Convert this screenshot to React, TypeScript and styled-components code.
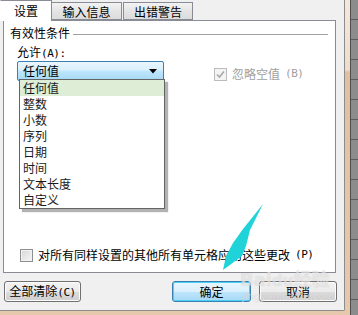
import React from 'react';
import styled, {createGlobalStyle} from "styled-components";

const options = ['任何值', '整数', '小数', '序列', '日期', '时间', '文本长度', '自定义'];

function App() {
    return (
        <Screen>
            <GlobalStyle/>
            <Frame>
                <Dialog>
                    <Tabs>
                        <Tab active>设置</Tab>
                        <Tab>输入信息</Tab>
                        <Tab>出错警告</Tab>
                    </Tabs>
                    <Panel>
                        <GroupHeader>
                            <span>有效性条件</span>
                            <GroupLine/>
                        </GroupHeader>
                        <Label>允许<Latin>(A):</Latin></Label>
                        <CriteriaRow>
                            <Select>
                                <span>任何值</span>
                                <svg width="8" height="5" viewBox="0 0 8 5">
                                    <polygon points="0,0 8,0 4,4.5" fill="#000"/>
                                </svg>
                            </Select>
                            <CheckLabel disabled>
                                <CheckBox disabled>
                                    <svg width="9" height="9" viewBox="0 0 9 9">
                                        <path d="M1 4.5 L3.5 7 L8 1.5" stroke="#a8a8a8" strokeWidth="1.6" fill="none"/>
                                    </svg>
                                </CheckBox>
                                忽略空值<Latin>(B)</Latin>
                            </CheckLabel>
                        </CriteriaRow>
                        <ApplyRow>
                            <CheckLabel>
                                <CheckBox/>
                                对所有同样设置的其他所有单元格应用这些更改<Latin>(P)</Latin>
                            </CheckLabel>
                        </ApplyRow>
                        <List>
                            {options.map((o, i) => (
                                <Item key={o} selected={i === 0}>{o}</Item>
                            ))}
                        </List>
                    </Panel>
                    <Buttons>
                        <Button width={77}>全部清除<Latin>(C)</Latin></Button>
                        <Spacer/>
                        <Button width={79} primary>确定</Button>
                        <Button width={78}>取消</Button>
                    </Buttons>
                    <Watermark>
                        <WatermarkLogo>Bai<small>du</small>经验</WatermarkLogo>
                        <WatermarkUrl>jingyan.baidu.com</WatermarkUrl>
                    </Watermark>
                </Dialog>
            </Frame>
            <Sheet/>
            <Arrow width="46" height="72" viewBox="0 0 46 72">
                <polygon points="43,2 30,28 26,44 22,54 3,68 6,54 13,41 23,27" fill="#1fd3d9"/>
            </Arrow>
        </Screen>
    )
}

export default App;

const GlobalStyle = createGlobalStyle`
    html, body {
        margin: 0;
        padding: 0;
        background: #7b7b7b;
    }
    body {
        font-family: "Noto Sans CJK SC", "Liberation Sans", sans-serif;
        font-size: 12px;
        color: #000;
    }
`
const Screen = styled.div`
    width: 358px;
    height: 315px;
    display: flex;
    position: relative;
    overflow: hidden;
`
const Frame = styled.div`
    width: 351px;
    height: 315px;
    box-sizing: border-box;
    padding: 0 5px 4px 0;
    background: linear-gradient(to bottom, #f4e8dc 0, #efdccb 70px, #e0c0a0 72px, #e6c9ad 100%);
    border-right: 1px solid #4e4e4e;
    display: flex;
`
const Sheet = styled.div`
    flex: 1;
    background: repeating-linear-gradient(to bottom, #8c8c8c 0, #8c8c8c 19px, #5c5c5c 19px, #5c5c5c 20px);
`
const Dialog = styled.div`
    flex: 1;
    background: #f0f0f0;
    border-right: 1px solid #8c8c8c;
    border-bottom: 1px solid #8c8c8c;
    border-bottom-right-radius: 2px;
    display: flex;
    flex-direction: column;
    position: relative;
`
const Tabs = styled.div`
    display: flex;
    align-items: flex-end;
    height: 20px;
    position: relative;
    z-index: 2;
`
const Tab = styled.div<{ active?: boolean }>`
    box-sizing: border-box;
    display: flex;
    align-items: center;
    justify-content: center;
    line-height: 12px;
    width: ${p => p.active ? 52 : 70}px;
    height: ${p => p.active ? 21 : 18}px;
    margin-bottom: ${p => p.active ? -1 : 0}px;
    margin-left: ${p => p.active ? 0 : 1}px;
    padding-top: ${p => p.active ? 0 : 1}px;
    background: ${p => p.active ? '#fff' : 'linear-gradient(to bottom, #f3f3f3, #e4e4e4 50%, #dcdcdc)'};
    border: 1px solid #898c95;
    border-left-color: ${p => p.active ? 'transparent' : '#898c95'};
    border-bottom: ${p => p.active ? 'none' : '1px solid #898c95'};

    &:nth-child(2) {
        margin-left: 0;
        border-left: none;
    }
`
const Panel = styled.div`
    position: relative;
    z-index: 1;
    box-sizing: border-box;
    margin-left: 3px;
    width: 333px;
    height: 253px;
    background: #fff;
    border: 1px solid #898c95;
    display: flex;
    flex-direction: column;
    padding: 6px 7px 10px 6px;
`
const GroupHeader = styled.div`
    display: flex;
    align-items: center;
    height: 12px;
    line-height: 12px;
    gap: 3px;
`
const GroupLine = styled.div`
    flex: 1;
    height: 1px;
    background: #a0a0a0;
    margin-top: 2px;
`
const Latin = styled.span`
    font-family: "DejaVu Sans Mono", "Liberation Mono", monospace;
    font-size: 11px;
    letter-spacing: -0.5px;
`
const Label = styled.div`
    margin: 7px 0 0 7px;
    height: 12px;
    line-height: 12px;
`
const CriteriaRow = styled.div`
    display: flex;
    align-items: center;
    margin: 3px 0 0 7px;
    height: 20px;
`
const Select = styled.div`
    box-sizing: border-box;
    width: 147px;
    height: 20px;
    border: 1px solid #3c7fb1;
    border-radius: 2px;
    background: linear-gradient(to bottom, #eaf6fd 0, #d9f0fc 45%, #bee6fd 50%, #a7d9f5 100%);
    display: flex;
    align-items: center;
    justify-content: space-between;
    padding: 0 6px 0 5px;
    font-size: 12px;
    line-height: 12px;
`
const CheckLabel = styled.label<{ disabled?: boolean }>`
    display: flex;
    align-items: center;
    gap: 5px;
    line-height: 12px;
    color: ${p => p.disabled ? '#a0a0a0' : '#000'};
    margin-left: ${p => p.disabled ? 50 : 0}px;
    margin-top: ${p => p.disabled ? 6 : 0}px;
`
const CheckBox = styled.span<{ disabled?: boolean }>`
    box-sizing: border-box;
    width: 13px;
    height: 13px;
    border: 1px solid ${p => p.disabled ? '#bcbcbc' : '#8e8f8f'};
    background: ${p => p.disabled ? '#f4f4f4' : 'linear-gradient(135deg, #d6d6d6, #f7f7f7)'};
    box-shadow: inset 0 0 0 1px ${p => p.disabled ? '#f4f4f4' : '#f2f2f2'};
    display: flex;
    align-items: center;
    justify-content: center;
`
const ApplyRow = styled.div`
    margin: auto 0 0 10px;
    height: 14px;
    display: flex;
    align-items: center;
`
const List = styled.div`
    position: absolute;
    left: 15px;
    top: 58px;
    width: 146px;
    box-sizing: border-box;
    background: #fff;
    border: 1px solid #646464;
    box-shadow: 3px 3px 1px rgba(0, 0, 0, 0.3);
`
const Item = styled.div<{ selected?: boolean }>`
    height: 16px;
    line-height: 16px;
    padding-left: 3px;
    color: #1a1a1a;
    background: ${p => p.selected ? '#deedd6' : 'transparent'};
`
const Buttons = styled.div`
    display: flex;
    align-items: center;
    gap: 8px;
    margin-top: 8px;
    padding: 0 7px 0 4px;
`
const Spacer = styled.div`
    flex: 1;
`
const Button = styled.button<{ width: number, primary?: boolean }>`
    box-sizing: border-box;
    width: ${p => p.width}px;
    height: 21px;
    padding: 0;
    font-family: inherit;
    font-size: 12px;
    line-height: 12px;
    color: #000;
    border-radius: 3px;
    border: 1px solid ${p => p.primary ? '#3c7fb1' : '#707070'};
    background: ${p => p.primary
        ? 'linear-gradient(to bottom, #eaf6fd 0, #d9f0fc 50%, #bee6fd 51%, #a7d9f5 100%)'
        : 'linear-gradient(to bottom, #f2f2f2 0, #ebebeb 50%, #dddddd 51%, #cfcfcf 100%)'};
    box-shadow: inset 0 0 0 1px ${p => p.primary ? '#48d2f8' : '#fcfcfc'};
`
const Watermark = styled.div`
    position: absolute;
    z-index: 3;
    left: 240px;
    top: 270px;
    white-space: nowrap;
    color: rgba(255, 255, 255, 0.5);
    text-shadow: 0 0 1px rgba(140, 140, 140, 0.4);
    pointer-events: none;
`
const WatermarkLogo = styled.div`
    font-family: "DejaVu Sans", "Noto Sans CJK SC", sans-serif;
    font-size: 18px;
    font-weight: bold;
    line-height: 20px;

    small {
        font-size: 15px;
    }
`
const WatermarkUrl = styled.div`
    font-family: "DejaVu Sans", sans-serif;
    font-size: 10px;
    line-height: 11px;
    margin-left: 2px;
`
const Arrow = styled.svg`
    position: absolute;
    z-index: 5;
    left: 220px;
    top: 202px;
    pointer-events: none;
`
